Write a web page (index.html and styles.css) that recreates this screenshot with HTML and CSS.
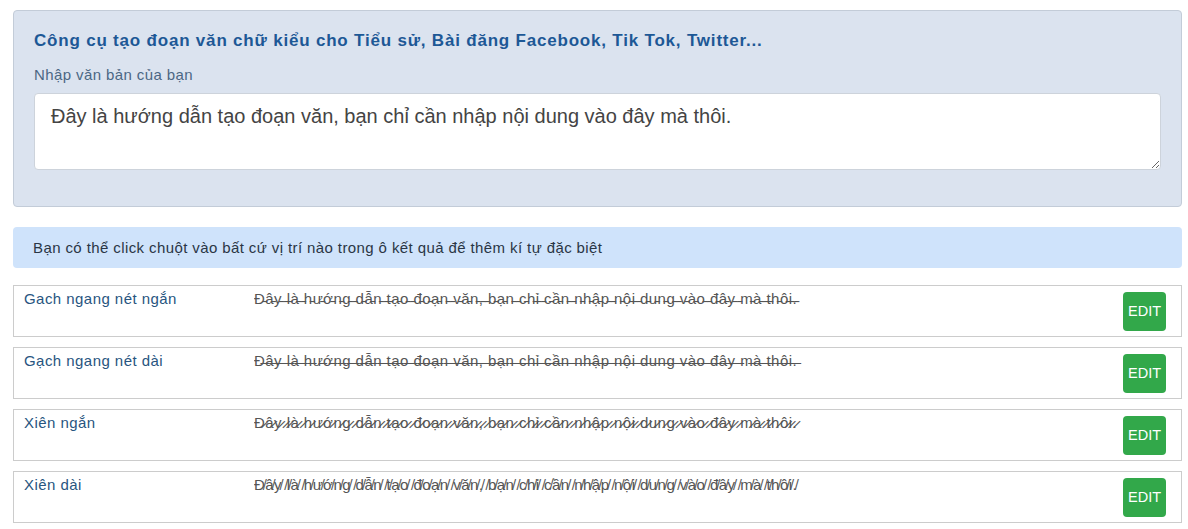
FILE: index.html
```html
<!DOCTYPE html>
<html lang="vi">
<head>
<meta charset="utf-8">
<title>Công cụ tạo đoạn văn chữ kiểu</title>
<link rel="stylesheet" href="styles.css">
</head>
<body>
<div class="page">
  <section class="panel">
    <h1 class="panel-title">Công cụ tạo đoạn văn chữ kiểu cho Tiểu sử, Bài đăng Facebook, Tik Tok, Twitter...</h1>
    <label class="panel-label" for="src">Nhập văn bản của bạn</label>
    <textarea id="src" class="panel-input" spellcheck="false">Đây là hướng dẫn tạo đoạn văn, bạn chỉ cần nhập nội dung vào đây mà thôi.</textarea>
  </section>

  <div class="notice">Bạn có thể click chuột vào bất cứ vị trí nào trong ô kết quả để thêm kí tự đặc biệt</div>

  <div class="results">
    <div class="row">
      <div class="row-name">Gach ngang nét ngắn</div>
      <div class="row-text">Đ&#x335;â&#x335;y&#x335; &#x335;l&#x335;à&#x335; &#x335;h&#x335;ư&#x335;ớ&#x335;n&#x335;g&#x335; &#x335;d&#x335;ẫ&#x335;n&#x335; &#x335;t&#x335;ạ&#x335;o&#x335; &#x335;đ&#x335;o&#x335;ạ&#x335;n&#x335; &#x335;v&#x335;ă&#x335;n&#x335;,&#x335; &#x335;b&#x335;ạ&#x335;n&#x335; &#x335;c&#x335;h&#x335;ỉ&#x335; &#x335;c&#x335;ầ&#x335;n&#x335; &#x335;n&#x335;h&#x335;ậ&#x335;p&#x335; &#x335;n&#x335;ộ&#x335;i&#x335; &#x335;d&#x335;u&#x335;n&#x335;g&#x335; &#x335;v&#x335;à&#x335;o&#x335; &#x335;đ&#x335;â&#x335;y&#x335; &#x335;m&#x335;à&#x335; &#x335;t&#x335;h&#x335;ô&#x335;i&#x335;.&#x335;</div>
      <button class="edit-btn" type="button">EDIT</button>
    </div>
    <div class="row">
      <div class="row-name">Gạch ngang nét dài</div>
      <div class="row-text">Đ&#x336;â&#x336;y&#x336; &#x336;l&#x336;à&#x336; &#x336;h&#x336;ư&#x336;ớ&#x336;n&#x336;g&#x336; &#x336;d&#x336;ẫ&#x336;n&#x336; &#x336;t&#x336;ạ&#x336;o&#x336; &#x336;đ&#x336;o&#x336;ạ&#x336;n&#x336; &#x336;v&#x336;ă&#x336;n&#x336;,&#x336; &#x336;b&#x336;ạ&#x336;n&#x336; &#x336;c&#x336;h&#x336;ỉ&#x336; &#x336;c&#x336;ầ&#x336;n&#x336; &#x336;n&#x336;h&#x336;ậ&#x336;p&#x336; &#x336;n&#x336;ộ&#x336;i&#x336; &#x336;d&#x336;u&#x336;n&#x336;g&#x336; &#x336;v&#x336;à&#x336;o&#x336; &#x336;đ&#x336;â&#x336;y&#x336; &#x336;m&#x336;à&#x336; &#x336;t&#x336;h&#x336;ô&#x336;i&#x336;.&#x336;</div>
      <button class="edit-btn" type="button">EDIT</button>
    </div>
    <div class="row">
      <div class="row-name">Xiên ngắn</div>
      <div class="row-text">Đ&#x337;â&#x337;y&#x337; &#x337;l&#x337;à&#x337; &#x337;h&#x337;ư&#x337;ớ&#x337;n&#x337;g&#x337; &#x337;d&#x337;ẫ&#x337;n&#x337; &#x337;t&#x337;ạ&#x337;o&#x337; &#x337;đ&#x337;o&#x337;ạ&#x337;n&#x337; &#x337;v&#x337;ă&#x337;n&#x337;,&#x337; &#x337;b&#x337;ạ&#x337;n&#x337; &#x337;c&#x337;h&#x337;ỉ&#x337; &#x337;c&#x337;ầ&#x337;n&#x337; &#x337;n&#x337;h&#x337;ậ&#x337;p&#x337; &#x337;n&#x337;ộ&#x337;i&#x337; &#x337;d&#x337;u&#x337;n&#x337;g&#x337; &#x337;v&#x337;à&#x337;o&#x337; &#x337;đ&#x337;â&#x337;y&#x337; &#x337;m&#x337;à&#x337; &#x337;t&#x337;h&#x337;ô&#x337;i&#x337;.&#x337;</div>
      <button class="edit-btn" type="button">EDIT</button>
    </div>
    <div class="row">
      <div class="row-name">Xiên dài</div>
      <div class="row-text">Đ&#x338;â&#x338;y&#x338; &#x338;l&#x338;à&#x338; &#x338;h&#x338;ư&#x338;ớ&#x338;n&#x338;g&#x338; &#x338;d&#x338;ẫ&#x338;n&#x338; &#x338;t&#x338;ạ&#x338;o&#x338; &#x338;đ&#x338;o&#x338;ạ&#x338;n&#x338; &#x338;v&#x338;ă&#x338;n&#x338;,&#x338; &#x338;b&#x338;ạ&#x338;n&#x338; &#x338;c&#x338;h&#x338;ỉ&#x338; &#x338;c&#x338;ầ&#x338;n&#x338; &#x338;n&#x338;h&#x338;ậ&#x338;p&#x338; &#x338;n&#x338;ộ&#x338;i&#x338; &#x338;d&#x338;u&#x338;n&#x338;g&#x338; &#x338;v&#x338;à&#x338;o&#x338; &#x338;đ&#x338;â&#x338;y&#x338; &#x338;m&#x338;à&#x338; &#x338;t&#x338;h&#x338;ô&#x338;i&#x338;.&#x338;</div>
      <button class="edit-btn" type="button">EDIT</button>
    </div>
  </div>
</div>
</body>
</html>
```

FILE: styles.css
```css
html, body {
  margin: 0;
  padding: 0;
  background: #ffffff;
}

body {
  font-family: "Liberation Sans", Arial, sans-serif;
  color: #333333;
}

.page {
  padding: 10px 6px 0 13px;
  display: flex;
  flex-direction: column;
}

.panel {
  background: #dbe3ef;
  border: 1px solid #c3ccd8;
  border-radius: 4px;
  padding: 20px 20px 36px 20px;
  display: flex;
  flex-direction: column;
}

.panel-title {
  margin: 0;
  font-size: 17px;
  line-height: 20px;
  font-weight: bold;
  letter-spacing: 0.8px;
  color: #1d5896;
}

.panel-label {
  margin-top: 14px;
  margin-bottom: 9px;
  font-size: 15px;
  line-height: 19px;
  letter-spacing: 0.4px;
  color: #4b6784;
}

.panel-input {
  display: block;
  box-sizing: border-box;
  width: 100%;
  height: 77px;
  margin: 0;
  padding: 9px 16px;
  border: 1px solid #cdd3db;
  border-radius: 4px;
  background: #ffffff;
  font-family: "Liberation Sans", Arial, sans-serif;
  font-size: 20px;
  line-height: 26px;
  color: #444444;
  resize: vertical;
  outline: none;
}

.notice {
  margin-top: 20px;
  background: #cfe3fb;
  border-radius: 4px;
  padding: 0 20px;
  height: 41px;
  display: flex;
  align-items: center;
  font-size: 15px;
  letter-spacing: 0.4px;
  color: #2a3645;
}

.results {
  margin-top: 17px;
  display: flex;
  flex-direction: column;
  gap: 10px;
}

.row {
  box-sizing: border-box;
  height: 52px;
  border: 1px solid #cccccc;
  padding: 0 15px 0 10px;
  display: flex;
  align-items: center;
}

.row-name {
  flex: 0 0 230px;
  align-self: flex-start;
  padding-top: 3px;
  font-size: 15px;
  line-height: 20px;
  letter-spacing: 0.45px;
  color: #285580;
}

.row-text {
  flex: 1 1 auto;
  align-self: flex-start;
  padding-top: 3px;
  font-size: 15px;
  line-height: 20px;
  letter-spacing: 0.45px;
  color: #555555;
  white-space: nowrap;
  overflow: hidden;
}

.edit-btn {
  flex: 0 0 auto;
  width: 43px;
  height: 39px;
  padding: 0;
  border: none;
  border-radius: 4px;
  background: #32a84a;
  color: #ffffff;
  font-family: "Liberation Sans", Arial, sans-serif;
  font-size: 14.5px;
  cursor: pointer;
}
```
